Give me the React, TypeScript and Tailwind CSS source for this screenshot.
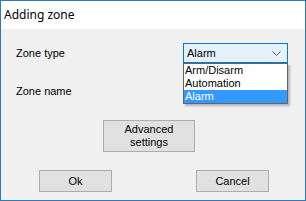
import React from 'react';

function Chevron() {
  return (
    <svg width="9" height="5" viewBox="0 0 9 5" fill="none" stroke="#5f5f5f" strokeWidth="1">
      <path d="M0.5 0.5L4.5 4.5L8.5 0.5" />
    </svg>
  );
}

const options = ['Arm/Disarm', 'Automation', 'Alarm'];

export default function App() {
  const selected = 'Alarm';

  return (
    <div className="w-[306px] h-[201px] flex flex-col border border-[#2b7bc0] bg-[#f0f0f0] text-black font-['Liberation_Sans',Arial,sans-serif] text-[11px] leading-none">
      {/* Title bar */}
      <div className="h-[28px] shrink-0 bg-white flex items-center pl-[3px] pb-[1px] text-[12px] font-['Noto_Sans',sans-serif]">
        Adding zone
      </div>

      {/* Body */}
      <div className="relative flex-1 px-[15px]">
        <div className="flex items-center h-[20px] mt-[14px]">
          <span className="w-[167px]">Zone type</span>
          <div className="w-[105px] h-[20px] border border-[#0078d7] bg-[#e5f1fb] flex items-center justify-between pl-[3px] pr-[6px]">
            <span>{selected}</span>
            <Chevron />
          </div>
        </div>

        <div className="flex items-center h-[20px] mt-[18px]">
          <span>Zone name</span>
        </div>

        <button className="block mt-[19px] ml-[87px] w-[92px] h-[32px] border border-[#adadad] bg-[#e1e1e1] leading-[13px] text-center">
          Advanced
          <br />
          settings
        </button>

        <div className="flex mt-[18px] ml-[23px] gap-[84px]">
          <button className="w-[73px] h-[22px] border border-[#adadad] bg-[#e1e1e1]">Ok</button>
          <button className="w-[73px] h-[22px] border border-[#adadad] bg-[#e1e1e1]">Cancel</button>
        </div>

        {/* Open dropdown list */}
        <div className="absolute left-[182px] top-[34px] w-[105px] border border-[#646464] bg-white shadow-[2px_2px_2px_rgba(0,0,0,0.25)]">
          {options.map((o) => (
            <div
              key={o}
              className={
                o === selected
                  ? 'h-[13px] flex items-center pl-[1px] bg-[#3399ff] text-white'
                  : 'h-[13px] flex items-center pl-[1px]'
              }
            >
              {o}
            </div>
          ))}
        </div>
      </div>
    </div>
  );
}
